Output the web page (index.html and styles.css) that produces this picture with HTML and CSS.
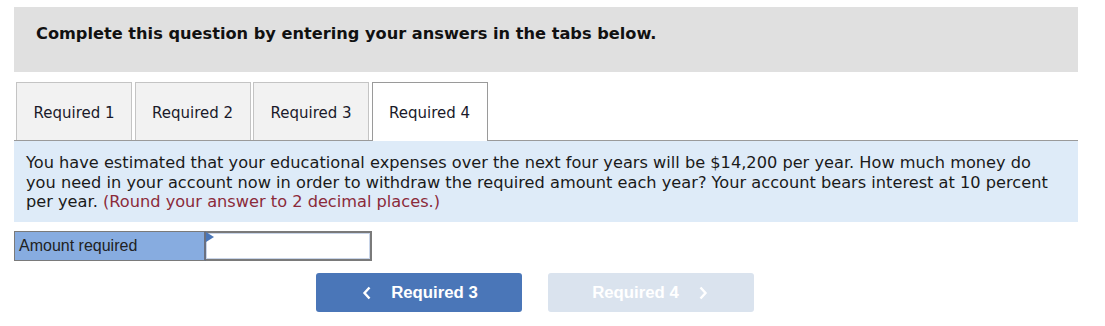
FILE: index.html
```html
<!DOCTYPE html>
<html>
<head>
<meta charset="utf-8">
<link rel="stylesheet" href="styles.css">
</head>
<body>
<div class="wrap">
  <div class="header">Complete this question by entering your answers in the tabs below.</div>
  <div class="tabs">
    <div class="tab">Required 1</div>
    <div class="tab">Required 2</div>
    <div class="tab">Required 3</div>
    <div class="tab active">Required 4</div>
  </div>
  <div class="panel">You have estimated that your educational expenses over the next four years will be $14,200 per year. How much money do you need in your account now in order to withdraw the required amount each year? Your account bears interest at 10 percent per year. <span class="hint">(Round your answer to 2 decimal places.)</span></div>
  <div class="answer">
    <div class="label">Amount required</div>
    <div class="input"><span class="flag"></span></div>
  </div>
  <div class="nav">
    <div class="btn prev"><span class="chev">
      <svg width="10" height="14" viewBox="0 0 10 14"><path d="M7.5 1.5 L2.5 7 L7.5 12.5" fill="none" stroke="#fff" stroke-width="2.4"/></svg>
    </span>Required 3</div>
    <div class="btn next">Required 4<span class="chev">
      <svg width="10" height="14" viewBox="0 0 10 14"><path d="M2.5 1.5 L7.5 7 L2.5 12.5" fill="none" stroke="#fff" stroke-width="2.4"/></svg>
    </span></div>
  </div>
</div>
</body>
</html>
```
FILE: styles.css
```css
body {
  margin: 0;
  background: #fff;
  font-family: "DejaVu Sans", Verdana, sans-serif;
  color: #1a1a1a;
}
.wrap {
  width: 1064px;
  padding: 7px 0 0 14px;
}
.header {
  background: #e0e0e0;
  height: 65px;
  box-sizing: border-box;
  padding: 17px 0 0 22px;
  font-weight: bold;
  font-size: 16.2px;
  color: #111;
}
.tabs {
  display: flex;
  gap: 2.5px;
  margin-top: 10px;
  padding-left: 2px;
  border-bottom: 1px solid #9a9a9a;
  height: 58px;
}
.tab {
  width: 116px;
  height: 58px;
  box-sizing: border-box;
  background: #f2f2f2;
  border: 1px solid #c4c4c4;
  border-bottom: none;
  font-size: 15px;
  display: flex;
  align-items: center;
  justify-content: center;
  padding-top: 2px;
  color: #1a1a2a;
}
.tab.active {
  background: #fff;
  border-color: #9a9a9a;
  height: 59px;
  margin-bottom: -1px;
}
.panel {
  background: #deebf8;
  padding: 12px 30px 10px 12px;
  font-size: 16.2px;
  line-height: 19.5px;
  height: 81px;
  box-sizing: border-box;
}
.hint {
  color: #8b2a3a;
}
.answer {
  display: flex;
  margin-top: 9px;
  height: 30px;
}
.label {
  width: 192px;
  box-sizing: border-box;
  background: #87ace0;
  border: 1px solid #7a7a7a;
  border-right: 2px solid #6a7080;
  font-family: "Liberation Sans", Arial, sans-serif;
  font-size: 16px;
  padding: 5px 0 0 4px;
  color: #222;
}
.input {
  position: relative;
  width: 166px;
  box-sizing: border-box;
  background: #fff;
  border: 2px solid #7a7a7a;
  border-left: none;
  box-shadow: inset 0 0 0 1px #c8d4e8;
}
.flag {
  position: absolute;
  left: 0;
  top: -1px;
  width: 0;
  height: 0;
  border-top: 5px solid transparent;
  border-bottom: 5px solid transparent;
  border-left: 8px solid #4a76b8;
}
.nav {
  display: flex;
  gap: 26px;
  margin-top: 12px;
  padding-left: 302px;
}
.btn {
  width: 206px;
  height: 39px;
  box-sizing: border-box;
  border-radius: 3px;
  display: flex;
  align-items: center;
  justify-content: center;
  font-family: "Liberation Sans", Arial, sans-serif;
  font-weight: bold;
  font-size: 16.8px;
  color: #fff;
}
.prev {
  background: #4a76b8;
  padding-left: 8px;
}
.next {
  background: #dae3ee;
  padding-right: 8px;
}
.chev {
  display: inline-flex;
  align-items: center;
}
.prev .chev { margin-right: 19px; margin-left: -6px; }
.next .chev { margin-left: 19px; margin-right: -6px; }
```
